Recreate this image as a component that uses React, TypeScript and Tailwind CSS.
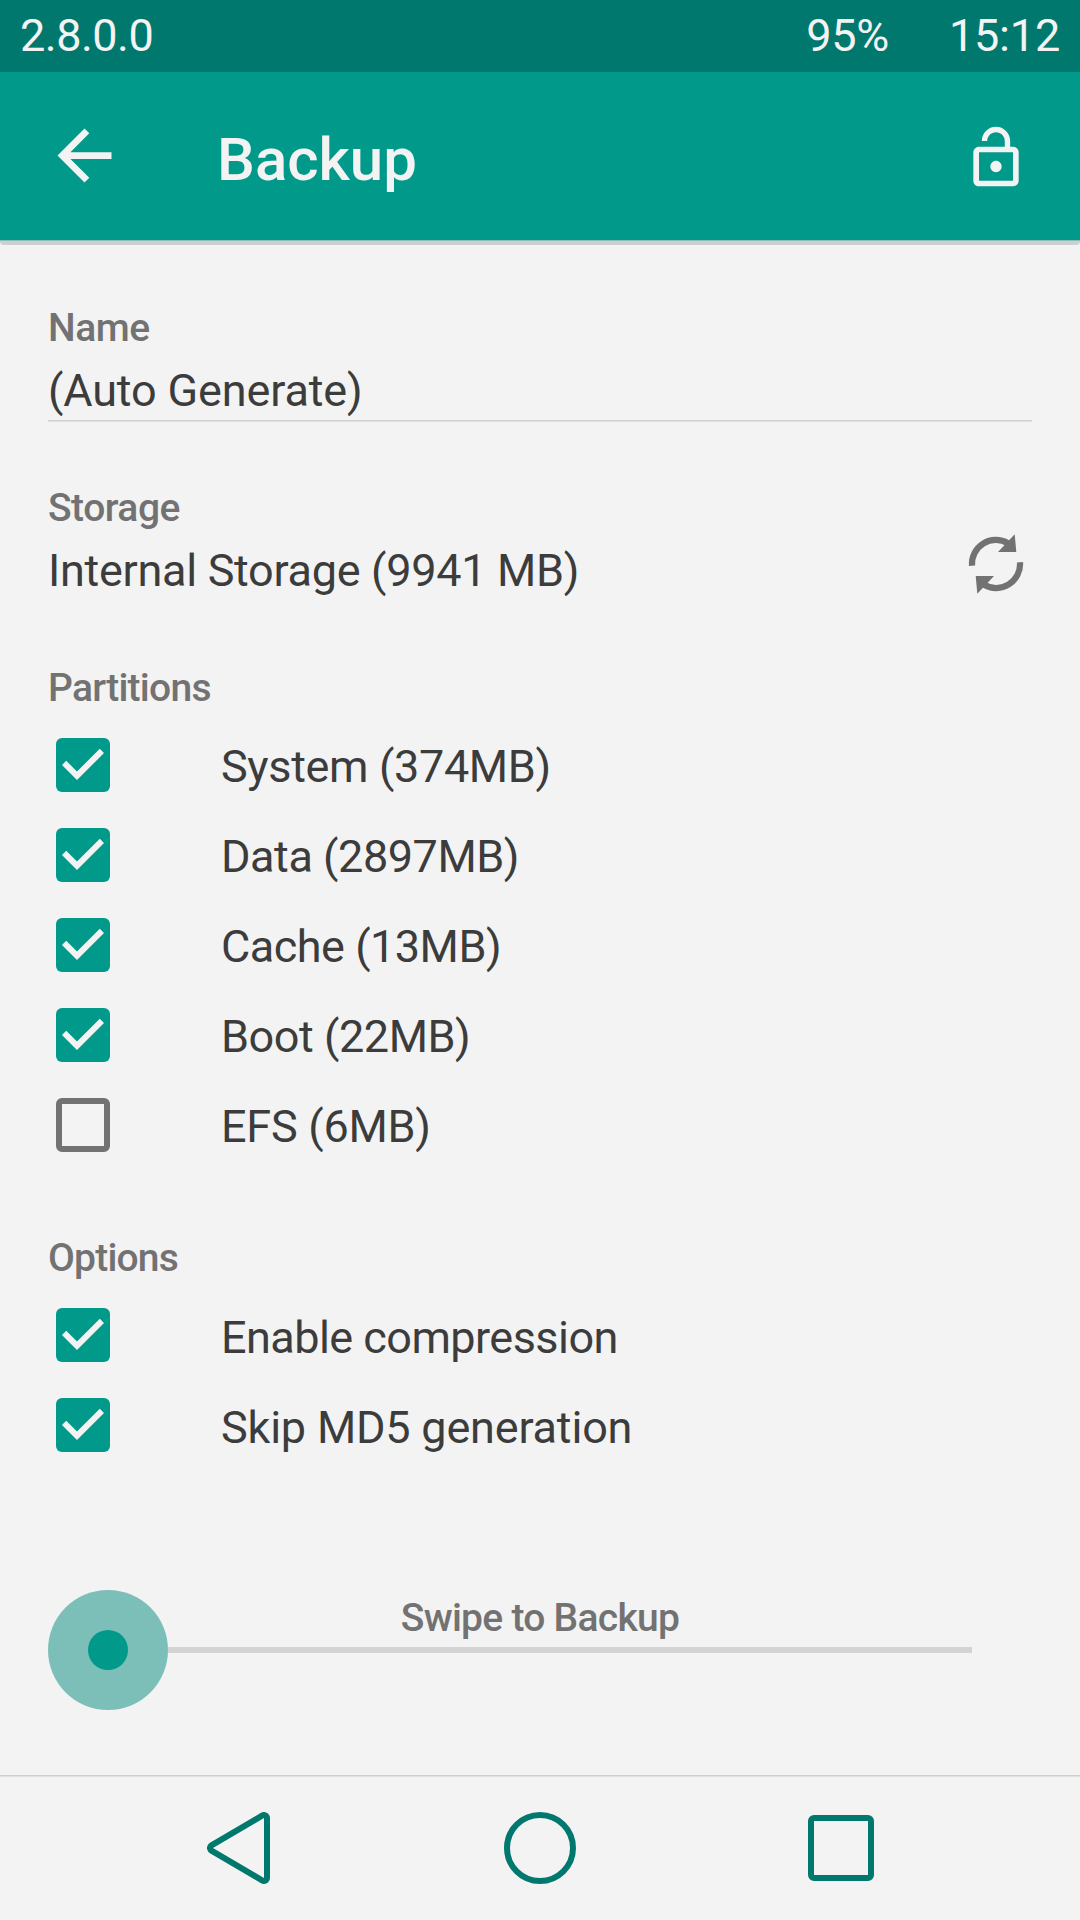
import { useState } from "react";
import clsx from "clsx";

type Item = { label: string; checked: boolean; tracking: string };

const partitions: Item[] = [
  { label: "System (374MB)", checked: true, tracking: "tracking-[-0.35px]" },
  { label: "Data (2897MB)", checked: true, tracking: "tracking-[-0.45px]" },
  { label: "Cache (13MB)", checked: true, tracking: "tracking-[-0.5px]" },
  { label: "Boot (22MB)", checked: true, tracking: "tracking-[-0.45px]" },
  { label: "EFS (6MB)", checked: false, tracking: "tracking-[-0.25px]" },
];

const options: Item[] = [
  { label: "Enable compression", checked: true, tracking: "tracking-[-0.55px]" },
  { label: "Skip MD5 generation", checked: true, tracking: "tracking-[-0.2px]" },
];

function ArrowIcon() {
  return (
    <svg viewBox="0 0 24 24" className="size-[81px] -mt-px" fill="currentColor">
      <path d="M20 11H7.83l5.59-5.59L12 4l-8 8 8 8 1.41-1.41L7.83 13H20v-2z" />
    </svg>
  );
}

function UnlockIcon() {
  return (
    <svg viewBox="0 0 24 24" className="mt-[3px] size-[68px]" fill="currentColor">
      <path d="M12 17c1.1 0 2-.9 2-2s-.9-2-2-2-2 .9-2 2 .9 2 2 2zm6-9h-1V6c0-2.76-2.24-5-5-5S7 3.24 7 6h1.9c0-1.71 1.39-3.1 3.1-3.1 1.71 0 3.1 1.39 3.1 3.1v2H6c-1.1 0-2 .9-2 2v10c0 1.1.9 2 2 2h12c1.1 0 2-.9 2-2V10c0-1.1-.9-2-2-2zm0 12H6V10h12v10z" />
    </svg>
  );
}

function RefreshIcon() {
  return (
    <svg viewBox="0 0 60 60" className="size-[60px] text-[#727272]">
      <g fill="none" stroke="currentColor" strokeWidth="6.2">
        <path d="M6 31.7A24 24 0 0 1 42 9.2" />
        <path d="M54 28.3A24 24 0 0 1 18 50.8" />
      </g>
      <path fill="currentColor" d="M48.7 .3 50.3 18H32zM11.3 59.7 9.7 42H28z" />
    </svg>
  );
}

function Checkbox({ checked }: { checked: boolean }) {
  return (
    <span
      className={clsx(
        "size-[54px] shrink-0 rounded-md",
        checked ? "bg-[#00998a]" : "border-6 border-[#727272]"
      )}
    >
      {checked && (
        <svg viewBox="3 3 18 18" className="size-full" fill="#f3f3f3">
          <path d="M10 17l-5-5 1.41-1.41L10 14.17l7.59-7.59L19 8z" />
        </svg>
      )}
    </span>
  );
}

function Label({ children, className }: { children: string; className?: string }) {
  return (
    <h2 className={clsx("text-[39px] leading-[50px] font-medium text-[#727272]", className)}>
      {children}
    </h2>
  );
}

type CheckListProps = { title: string; items: Item[]; labelClass: string; textClass: string };

function CheckList({ title, items, labelClass, textClass }: CheckListProps) {
  const [list, setList] = useState(items);

  const toggle = (i: number) =>
    setList(list.map((item, n) => (n === i ? { ...item, checked: !item.checked } : item)));

  return (
    <section className="mb-[63px]">
      <Label className={labelClass}>{title}</Label>
      <ul className="mt-[7px]">
        {list.map((item, i) => (
          <li key={item.label} className="flex h-[90px] items-center pl-2" onClick={() => toggle(i)}>
            <Checkbox checked={item.checked} />
            <span className={clsx("ml-[111px]", textClass, item.tracking)}>{item.label}</span>
          </li>
        ))}
      </ul>
    </section>
  );
}

export default function App() {
  return (
    <div className="flex h-[1920px] w-[1080px] flex-col bg-[#f3f3f3] font-['Roboto',sans-serif] text-[45px] text-[#3c3c3c]">
      <div className="flex h-[72px] items-center bg-[#00786d] px-5 text-[#f3f3f3]">
        <span className="tracking-[-0.5px]">2.8.0.0</span>
        <span className="ml-auto tracking-[-0.3px]">95%</span>
        <span className="ml-[60px] tracking-[-0.2px]">15:12</span>
      </div>

      <header className="flex h-[168px] items-center bg-[#00998a] pr-[50px] pl-11 text-[#f3f3f3]">
        <ArrowIcon />
        <h1 className="mt-[7px] ml-[92px] flex-1 text-[60px] font-medium">Backup</h1>
        <UnlockIcon />
      </header>
      <div className="h-[5px] rounded-b border-t border-[#8cbfb9] bg-[#cdd0cf]" />

      <main className="flex-1 px-12 pt-[58px]">
        <section className="h-[180px]">
          <Label className="tracking-[-0.5px]">Name</Label>
          <p className="mt-2 leading-[59px] tracking-[-0.15px]">(Auto Generate)</p>
          <div className="h-0.5 border-t border-[#cdd0cf] bg-[#e0e2e1]" />
        </section>

        <section className="flex h-[180px] items-start justify-between">
          <div>
            <Label className="tracking-[-0.5px]">Storage</Label>
            <p className="mt-2 leading-[59px] tracking-[-0.3px]">Internal Storage (9941 MB)</p>
          </div>
          <div className="mt-[51px] mr-1.5">
            <RefreshIcon />
          </div>
        </section>

        <CheckList
          title="Partitions"
          items={partitions}
          labelClass="tracking-[-0.75px]"
          textClass="mt-[3px]"
        />
        <CheckList
          title="Options"
          items={options}
          labelClass="tracking-[-0.8px]"
          textClass="mt-[5px]"
        />

        {/* swipe slider */}
        <div className="relative mt-[120px] flex h-[120px] items-center">
          <div className="flex size-[120px] items-center justify-center rounded-full bg-[#7cbfb9]">
            <div className="size-10 rounded-full bg-[#00998a]" />
          </div>
          <div className="mr-[60px] h-1.5 flex-1 bg-[#d2d4d4]" />
          <div className="absolute inset-x-0 top-[3px] text-center">
            <Label className="tracking-[-0.73px]">Swipe to Backup</Label>
          </div>
        </div>
      </main>

      <nav className="h-[145px]">
        <div className="h-0.5 border-t border-[#cdd0cf] bg-[#e0e2e1]" />
        <div className="flex h-[142px] items-center pl-[207px]">
          <svg viewBox="0 0 63 72" className="h-[72px] w-[63px]">
            <path
              d="M57 6v60L6 36z"
              fill="#f3f3f3"
              stroke="#00786d"
              strokeWidth="12"
              strokeLinejoin="round"
              paintOrder="stroke"
            />
          </svg>
          <div className="ml-[234px] size-[72px] rounded-full border-6 border-[#00786d]" />
          <div className="ml-[232px] size-[66px] rounded-md border-6 border-[#00786d]" />
        </div>
      </nav>
    </div>
  );
}
